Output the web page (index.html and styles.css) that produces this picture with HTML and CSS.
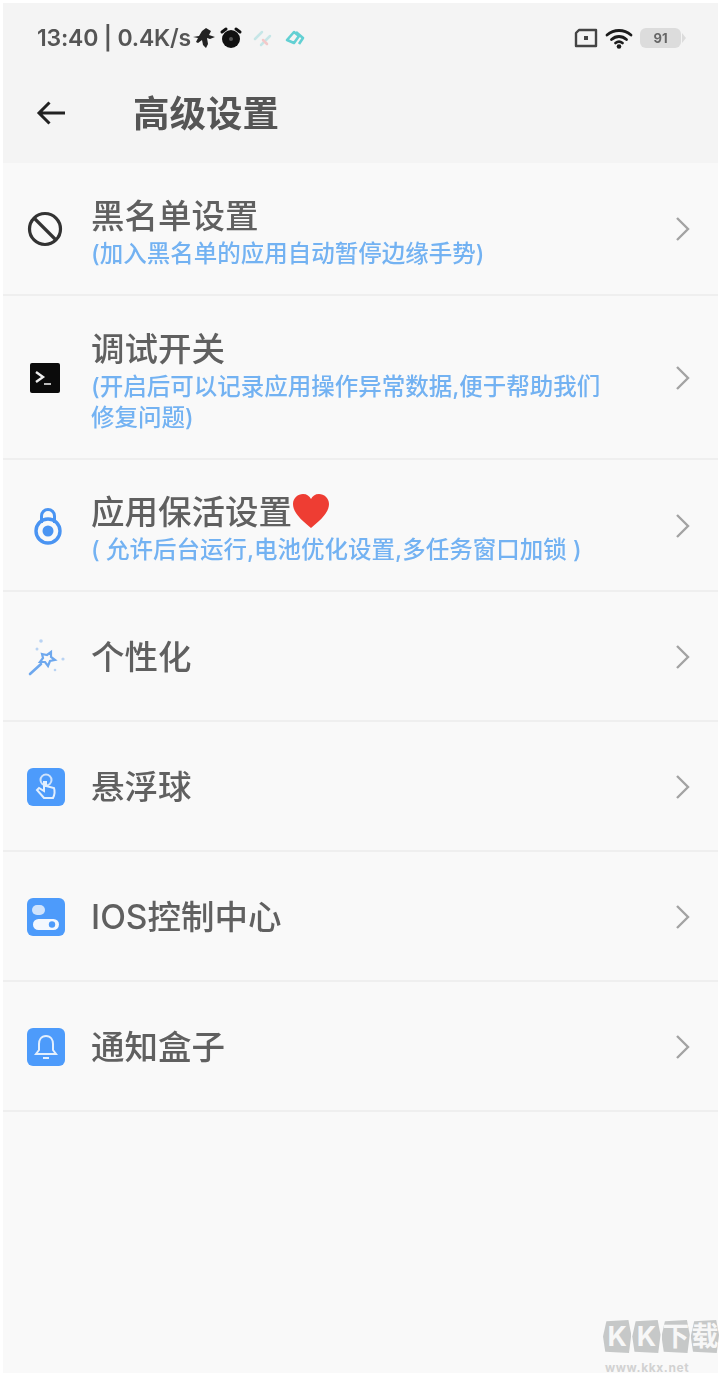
FILE: index.html
```html
<!DOCTYPE html>
<html lang="zh-CN">
<head>
    <meta charset="UTF-8">
    <meta name="viewport" content="width=device-width, initial-scale=1.0">
    <title>高级设置</title>
    <link rel="stylesheet" href="styles.css">
</head>
<body>
    <div class="screen">
        <div class="top">
            <div class="status-bar">
                <div class="status-left">
                    <span class="status-text">13:40 | 0.4K/s</span>
                    <svg class="st-icon" width="24" height="24" viewBox="0 0 24 24"><path d="M1 11l6-1 3-5 4-3 5 3-2 4 6 2-5 2-3-1 1 6-2 4-3-3-1-5-4 3-2-1 2-4z" fill="#222"/></svg>
                    <svg class="st-icon alarm" width="24" height="24" viewBox="0 0 24 24"><circle cx="12" cy="13" r="9" fill="#111"/><path d="M3 6l4-3M21 6l-4-3" stroke="#111" stroke-width="3" stroke-linecap="round"/><circle cx="12" cy="13" r="2" fill="#555"/></svg>
                    <svg class="st-icon app-a" width="22" height="22" viewBox="0 0 22 22"><path d="M3 12l7-7M9 18l9-9" stroke="#c6e6e7" stroke-width="2.500" stroke-linecap="round"/><path d="M11 13l4 4" stroke="#f3c9c9" stroke-width="2.500" stroke-linecap="round"/></svg>
                    <svg class="st-icon app-b" width="22" height="22" viewBox="0 0 22 22"><path d="M3 13l7-8 5 4-5 7zM12 5l7 6-4 6" fill="none" stroke="#62d0d3" stroke-width="2.600" stroke-linejoin="round"/></svg>
                </div>
                <div class="status-right">
                    <svg width="24" height="20" viewBox="0 0 24 20"><path d="M5 2h17v16H2V5z" fill="none" stroke="#444" stroke-width="2.400" stroke-linejoin="round"/><rect x="10" y="8" width="4" height="4" fill="#444"/></svg>
                    <svg width="28" height="22" viewBox="0 0 28 22"><path d="M2 8c7-6 17-6 24 0M6.500 12.500c4.500-4 10.500-4 15 0M10.500 16c2-1.600 5-1.600 7 0" fill="none" stroke="#1c1c1c" stroke-width="2.800" stroke-linecap="round"/><circle cx="14" cy="19.500" r="2.300" fill="#1c1c1c"/></svg>
                    <div class="battery"><span class="battery-level">91</span><i class="battery-tip"></i></div>
                </div>
            </div>
            <div class="title-bar">
                <svg class="back" width="32" height="30" viewBox="0 0 32 30"><path d="M30 15H4M14.500 4.500L4 15l10.500 10.500" fill="none" stroke="#222" stroke-width="3"/></svg>
                <h1>高级设置</h1>
            </div>
        </div>

        <div class="list">
            <div class="row row-a">
                <div class="icon-slot">
                    <svg width="36" height="36" viewBox="0 0 36 36"><circle cx="18" cy="18" r="15.500" fill="none" stroke="#333" stroke-width="3.200"/><path d="M7 7l22 22" stroke="#333" stroke-width="3.200"/></svg>
                </div>
                <div class="row-body">
                    <div class="row-title">黑名单设置</div>
                    <div class="row-sub">(加入黑名单的应用自动暂停边缘手势)</div>
                </div>
                <svg class="chevron" width="16" height="26" viewBox="0 0 16 26"><path d="M2 2l11 11L2 24" fill="none" stroke="#a3a3a3" stroke-width="2.400"/></svg>
            </div>
            <div class="row row-b">
                <div class="icon-slot">
                    <svg width="36" height="36" viewBox="0 0 36 36"><rect x="3" y="3" width="30" height="30" rx="2" fill="#0b0b0b"/><path d="M9 12l7 5-7 5" fill="none" stroke="#eee" stroke-width="2.400"/><path d="M17 24h7" stroke="#bbb" stroke-width="2"/></svg>
                </div>
                <div class="row-body">
                    <div class="row-title">调试开关</div>
                    <div class="row-sub">(开启后可以记录应用操作异常数据,便于帮助我们<br>修复问题)</div>
                </div>
                <svg class="chevron" width="16" height="26" viewBox="0 0 16 26"><path d="M2 2l11 11L2 24" fill="none" stroke="#a3a3a3" stroke-width="2.400"/></svg>
            </div>
            <div class="row row-a">
                <div class="icon-slot">
                    <svg class="lock" width="36" height="40" viewBox="0 0 36 40"><path d="M11.500 17v-7a6.500 6.500 0 0 1 13 0v7" fill="none" stroke="#4a94f2" stroke-width="3"/><circle cx="18" cy="25" r="12" fill="none" stroke="#4a94f2" stroke-width="3.400"/><circle cx="18" cy="25" r="5.500" fill="#4a94f2"/></svg>
                </div>
                <div class="row-body">
                    <div class="row-title">应用保活设置<svg class="heart" width="38" height="36" viewBox="0 0 38 36"><path d="M19 35C8 26 1 19 1 11 1 5 6 1 11 1c4 0 6.500 2 8 5 1.500-3 4-5 8-5 5 0 10 4 10 10 0 8-7 15-18 24z" fill="#ee3d33"/></svg></div>
                    <div class="row-sub">( 允许后台运行,电池优化设置,多任务窗口加锁 )</div>
                </div>
                <svg class="chevron" width="16" height="26" viewBox="0 0 16 26"><path d="M2 2l11 11L2 24" fill="none" stroke="#a3a3a3" stroke-width="2.400"/></svg>
            </div>
            <div class="row">
                <div class="icon-slot">
                    <svg width="40" height="40" viewBox="0 0 40 40"><path d="M3 37l11-10" stroke="#6ea8ee" stroke-width="2.600" stroke-linecap="round"/><path d="M15 17l5 1 4-3 0 5 4 3-5 1-2 5-3-4-5 0 3-4z" fill="none" stroke="#6ea8ee" stroke-width="2.200"/><circle cx="14" cy="4" r="1.800" fill="#b9d3f3"/><circle cx="10" cy="12" r="1.500" fill="#b9d3f3"/><circle cx="36" cy="22" r="1.600" fill="#b9d3f3"/><circle cx="28" cy="33" r="1.300" fill="#b9d3f3"/></svg>
                </div>
                <div class="row-body"><div class="row-title">个性化</div></div>
                <svg class="chevron" width="16" height="26" viewBox="0 0 16 26"><path d="M2 2l11 11L2 24" fill="none" stroke="#a3a3a3" stroke-width="2.400"/></svg>
            </div>
            <div class="row">
                <div class="icon-slot">
                    <svg width="38" height="38" viewBox="0 0 38 38"><rect width="38" height="38" rx="6" fill="#4d9bfb"/><circle cx="19" cy="12" r="5.500" fill="none" stroke="#cfe3fc" stroke-width="2"/><path d="M17 13v10l-5-3-2 2 7 8h9c2-4 2-7 1-10l-8-2v-5" fill="none" stroke="#e3effd" stroke-width="2"/></svg>
                </div>
                <div class="row-body"><div class="row-title">悬浮球</div></div>
                <svg class="chevron" width="16" height="26" viewBox="0 0 16 26"><path d="M2 2l11 11L2 24" fill="none" stroke="#a3a3a3" stroke-width="2.400"/></svg>
            </div>
            <div class="row">
                <div class="icon-slot">
                    <svg width="38" height="38" viewBox="0 0 38 38"><rect width="38" height="38" rx="6" fill="#4d9bfb"/><path d="M10 7h3a5 5 0 0 1 0 10h-3a5 5 0 0 1 0-10z" fill="#cfe3fc"/><path d="M19 12h11" stroke="#4d9bfb" stroke-width="2"/><rect x="6" y="21" width="26" height="11" rx="5.500" fill="#f3f8fe"/><circle cx="25" cy="26.500" r="3.200" fill="#4d9bfb"/></svg>
                </div>
                <div class="row-body"><div class="row-title">IOS控制中心</div></div>
                <svg class="chevron" width="16" height="26" viewBox="0 0 16 26"><path d="M2 2l11 11L2 24" fill="none" stroke="#a3a3a3" stroke-width="2.400"/></svg>
            </div>
            <div class="row">
                <div class="icon-slot">
                    <svg width="38" height="38" viewBox="0 0 38 38"><rect width="38" height="38" rx="6" fill="#4d9bfb"/><path d="M19 8c-5 0-7 4-7 8v6l-3 4h20l-3-4v-6c0-4-2-8-7-8z" fill="none" stroke="#e3effd" stroke-width="2"/><path d="M16 30h6" stroke="#e3effd" stroke-width="2"/></svg>
                </div>
                <div class="row-body"><div class="row-title">通知盒子</div></div>
                <svg class="chevron" width="16" height="26" viewBox="0 0 16 26"><path d="M2 2l11 11L2 24" fill="none" stroke="#a3a3a3" stroke-width="2.400"/></svg>
            </div>
        </div>
    </div>

    <div class="watermark">
        <div class="wm-logo"><span>K</span><span>K</span><span>下</span><span>载</span></div>
        <div class="wm-url">www.kkx.net</div>
    </div>
</body>
</html>
```

FILE: styles.css
```css
* {
    margin: 0;
    padding: 0;
    box-sizing: border-box;
}

html, body {
    width: 720px;
    height: 1373px;
    overflow: hidden;
    background-color: #fff;
}

body {
    font-family: 'Inter', 'Noto Sans CJK SC', sans-serif;
    padding: 3px 2px 0 3px;
}

/* the reference is an upscaled, soft capture */
.screen {
    height: 1370px;
    background-color: #f9f9f9;
    overflow: hidden;
    filter: blur(0.7px);
}

.top {
    height: 160px;
    background-color: #f4f4f4;
}

.status-bar {
    height: 70px;
    display: flex;
    justify-content: space-between;
    align-items: center;
    padding: 0 32px 0 34px;
}

.status-left, .status-right {
    display: flex;
    align-items: center;
}

.status-text {
    font-size: 23px;
    font-weight: 600;
    color: #555;
    margin-right: 1px;
    letter-spacing: -0.2px;
}

.st-icon {
    flex-shrink: 0;
}

.alarm {
    margin-left: 3px;
}

.app-a {
    margin-left: 9px;
}

.app-b {
    margin-left: 10px;
}

.status-right {
    gap: 7px;
}

.battery {
    display: flex;
    align-items: center;
    width: 46px;
}

.battery-level {
    width: 41px;
    height: 20px;
    border-radius: 6px;
    background-color: #dcdcdc;
    color: #666;
    font-size: 13px;
    font-weight: 700;
    line-height: 20px;
    text-align: center;
}

.battery-tip {
    width: 0;
    height: 0;
    margin-left: 1px;
    border-left: 4px solid #dcdcdc;
    border-top: 5px solid transparent;
    border-bottom: 5px solid transparent;
}

.title-bar {
    height: 80px;
    display: flex;
    align-items: center;
    padding-left: 32px;
    padding-bottom: 2px;
}

.back {
    flex-shrink: 0;
    margin-top: 2px;
}

h1 {
    margin-left: 66px;
    font-size: 36.500px;
    font-weight: 700;
    color: #555;
    margin-top: -2px;
}

.row {
    height: 130px;
    display: flex;
    align-items: center;
    padding: 2px 27px 0 24px;
    border-bottom: 2px solid #efefef;
}

.row-a {
    height: 132.500px;
}

.row-b {
    height: 164px;
}

.row-a .row-body, .row-b .row-body {
    padding-top: 4px;
}

.icon-slot {
    flex-shrink: 0;
    width: 64px;
    display: flex;
    align-items: center;
}

.lock {
    margin-left: 3px;
}

.row-body {
    flex: 1;
    min-width: 0;
}

.row-title {
    font-size: 33.500px;
    font-weight: 500;
    line-height: 44px;
    color: #606060;
    display: flex;
    align-items: center;
}

.row-sub {
    font-size: 23.500px;
    font-weight: 500;
    line-height: 31px;
    color: #73b2f2;
}

.heart {
    flex-shrink: 0;
    margin-top: -3px;
}

.chevron {
    flex-shrink: 0;
}

.watermark {
    position: absolute;
    left: 603px;
    top: 1320px;
    width: 116px;
}

.wm-logo {
    display: flex;
    gap: 1px;
}

.wm-logo span {
    flex: 1;
    height: 33px;
    background-color: #c6c8c8;
    color: #f7f7f7;
    font-size: 27px;
    font-weight: 700;
    line-height: 33px;
    text-align: center;
    clip-path: polygon(12% 4%, 90% 0, 100% 45%, 92% 100%, 8% 96%, 0 50%);
}

.wm-url {
    margin: 8px 0 0 2px;
    font-size: 12px;
    font-weight: 700;
    line-height: 14px;
    color: #d2d2d2;
    letter-spacing: 0.6px;
}
```
